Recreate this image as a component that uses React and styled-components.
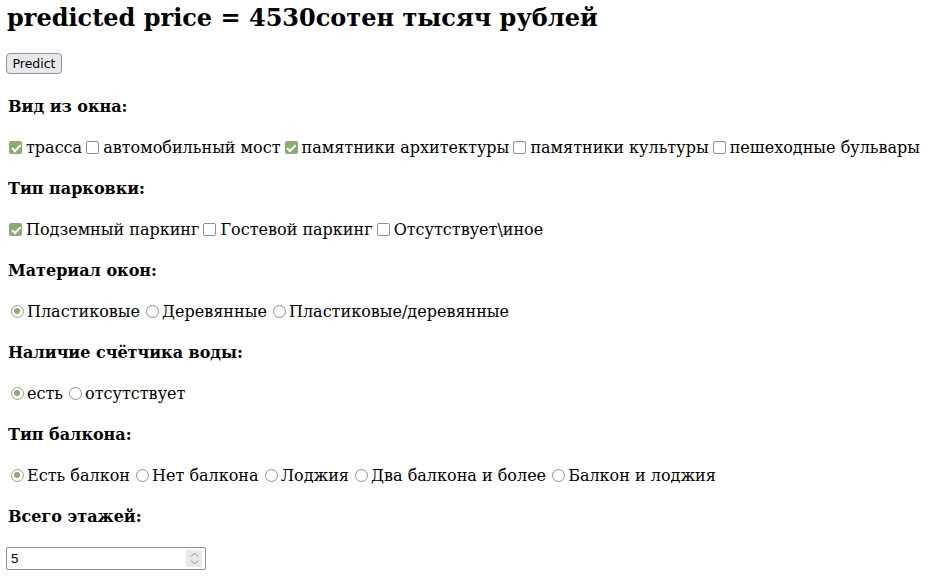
import React from "react";
import styled, { createGlobalStyle } from "styled-components";

const Global = createGlobalStyle`
  html, body { margin: 0; padding: 0; background: #fff; }
  body { font-family: "DejaVu Serif", serif; font-size: 16px; color: #000; }
`;

const Page = styled.div`
  padding: 4px 8px 8px 8px;
`;

const Title = styled.h2`
  margin: 0 0 21px -1px;
  font-size: 24px;
  font-weight: bold;
  line-height: 28px;
`;

const Button = styled.button`
  display: block;
  font-family: "DejaVu Sans", sans-serif;
  font-size: 12.5px;
  line-height: 15px;
  height: 21px;
  width: 56px;
  padding: 0;
  margin: 0 0 23px -2px;
  background: #e9e9ed;
  color: #000;
  border: 1px solid #8f8f9d;
  border-radius: 4px;
`;

const Heading = styled.h4`
  margin: 21px 0;
  font-size: 16px;
  font-weight: bold;
  line-height: 19px;
`;

const Row = styled.div`
  height: 21px;
  line-height: 21px;
  padding-left: 2px;
  white-space: nowrap;
`;

const Box = styled.input`
  appearance: none;
  width: 13px;
  height: 13px;
  margin: 0 4px 0 -1px;
  vertical-align: middle;
  position: relative;
  top: -1px;
  box-sizing: border-box;
  border: 1.5px solid #8f8f9d;
  border-radius: 2px;
  background: #fff;
  &[type="checkbox"]:checked {
    border: none;
    background: #8cab73;
  }
  &[type="checkbox"]:checked::after {
    content: "";
    position: absolute;
    left: 4.5px;
    top: 2px;
    width: 3px;
    height: 6.5px;
    border: solid #fff;
    border-width: 0 2px 2px 0;
    transform: rotate(45deg);
  }
  &[type="radio"] {
    border-radius: 50%;
    margin: 0 3px 0 1px;
  }
  &[type="radio"]:checked {
    border-color: #8cab73;
  }
  &[type="radio"]:checked::after {
    content: "";
    position: absolute;
    left: 2px;
    top: 2px;
    width: 6px;
    height: 6px;
    border-radius: 50%;
    background: #8cab73;
  }
`;

const NumberField = styled.div`
  display: flex;
  align-items: stretch;
  width: 200px;
  height: 23px;
  box-sizing: border-box;
  border: 1px solid #8f8f9d;
  border-radius: 2px;
  background: #fff;
  margin-left: -2px;
`;

const NumberInput = styled.input`
  flex: 1;
  min-width: 0;
  border: none;
  outline: none;
  padding: 0 4px;
  font-family: "Liberation Sans", Arial, sans-serif;
  font-size: 13.33px;
  background: transparent;
`;

const Spinner = styled.div`
  width: 16px;
  margin: 2px 3px 2px 0;
  background: #e9e9ed;
  display: flex;
  flex-direction: column;
  align-items: center;
  justify-content: center;
  gap: 3px;
`;

const groups = [
  {
    title: "Вид из окна:",
    type: "checkbox",
    items: [
      ["трасса", true],
      ["автомобильный мост", false],
      ["памятники архитектуры", true],
      ["памятники культуры", false],
      ["пешеходные бульвары", false],
    ],
  },
  {
    title: "Тип парковки:",
    type: "checkbox",
    items: [
      ["Подземный паркинг", true],
      ["Гостевой паркинг", false],
      ["Отсутствует\\иное", false],
    ],
  },
  {
    title: "Материал окон:",
    type: "radio",
    items: [
      ["Пластиковые", true],
      ["Деревянные", false],
      ["Пластиковые/деревянные", false],
    ],
  },
  {
    title: "Наличие счётчика воды:",
    type: "radio",
    items: [
      ["есть", true],
      ["отсутствует", false],
    ],
  },
  {
    title: "Тип балкона:",
    type: "radio",
    items: [
      ["Есть балкон", true],
      ["Нет балкона", false],
      ["Лоджия", false],
      ["Два балкона и более", false],
      ["Балкон и лоджия", false],
    ],
  },
];

export default function App() {
  return (
    <Page>
      <Global />
      <Title>predicted price = 4530сотен тысяч рублей</Title>
      <Button>Predict</Button>
      {groups.map((g, gi) => (
        <React.Fragment key={gi}>
          <Heading>{g.title}</Heading>
          <Row>
            {g.items.map(([label, checked], i) => (
              <React.Fragment key={i}>
                {i > 0 ? " " : ""}
                <Box type={g.type} name={"g" + gi} defaultChecked={checked} />
                {label}
              </React.Fragment>
            ))}
          </Row>
        </React.Fragment>
      ))}
      <Heading>Всего этажей:</Heading>
      <NumberField>
        <NumberInput defaultValue="5" />
        <Spinner>
          <svg width="9" height="5" viewBox="0 0 9 5">
            <path d="M1 4.5 L4.5 1 L8 4.5" fill="none" stroke="#8f8f9d" strokeWidth="1" />
          </svg>
          <svg width="9" height="5" viewBox="0 0 9 5">
            <path d="M1 0.5 L4.5 4 L8 0.5" fill="none" stroke="#8f8f9d" strokeWidth="1" />
          </svg>
        </Spinner>
      </NumberField>
    </Page>
  );
}
